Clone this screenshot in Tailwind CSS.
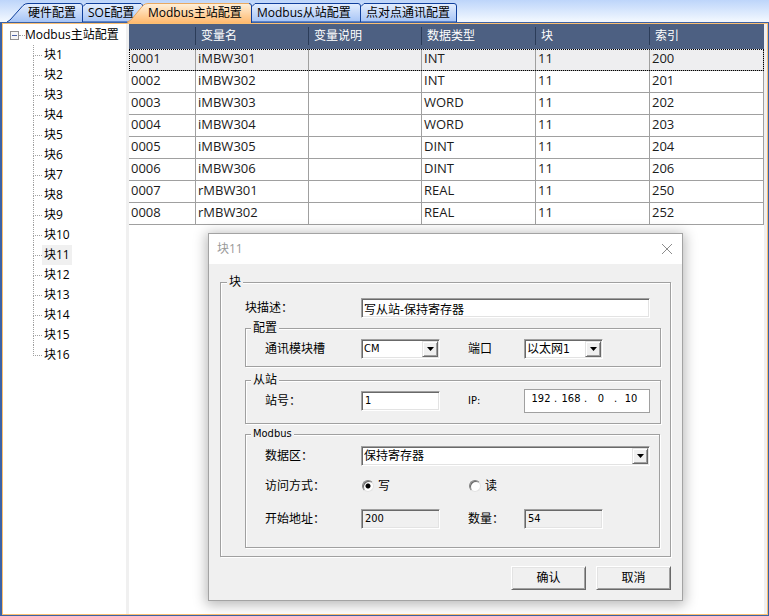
<!DOCTYPE html>
<html lang="zh-CN">
<head>
  <meta charset="UTF-8" />
  <meta name="viewport" content="width=device-width, initial-scale=1.0" />
  <title>Modbus主站配置</title>
  <script src="https://cdn.jsdelivr.net/npm/@tailwindcss/browser@4"></script>
</head>
<body class="min-h-screen flex flex-col bg-[#3b62a5] text-black text-xs font-['Open_Sans','Noto_Sans_CJK_SC',sans-serif]">

  <!-- Tab strip -->
  <nav class="relative z-10 -mb-px h-[23px] shrink-0 bg-linear-to-b from-[#bdd5fa] to-[#f4f9ff] border-b border-[#3b62a5] pl-[7px] pt-[3px]">
    <div class="flex">
      <button class="relative w-[76px] h-[19px] pl-[21px] text-left whitespace-nowrap">
        <svg class="absolute left-0 top-0 w-full h-full" viewBox="0 0 76 19" preserveAspectRatio="none">
          <defs>
            <linearGradient id="blueTab" x1="0" y1="0" x2="0" y2="1">
              <stop offset="0" stop-color="#e4eefe" /><stop offset="1" stop-color="#a6c4f6" />
            </linearGradient>
            <linearGradient id="orangeTab" x1="0" y1="0" x2="0" y2="1">
              <stop offset="0" stop-color="#fff1dc" /><stop offset="1" stop-color="#ffb96e" />
            </linearGradient>
          </defs>
          <path d="M0 19 L3 17 L16 2.500 Q18 .5 21 .5 H73 Q75.500 .5 75.500 3 V19" fill="url(#blueTab)" stroke="#0f3f9c" />
        </svg>
        <span class="relative">硬件配置</span>
      </button>
      <button class="relative w-[60px] h-[19px] pl-[5px] text-left whitespace-nowrap">
        <svg class="absolute left-0 top-0 w-full h-full" viewBox="0 0 60 19" preserveAspectRatio="none">
          <path d="M0 3.500 L3 .5 H58 L59.500 2 V19 H0" fill="url(#blueTab)" stroke="#0f3f9c" />
        </svg>
        <span class="relative">SOE配置</span>
      </button>
      <button class="relative -ml-[16px] -mb-px w-[125px] h-5 pl-[21px] text-left whitespace-nowrap" aria-current="page">
        <svg class="absolute left-0 top-0 w-full h-full" viewBox="0 0 125 20" preserveAspectRatio="none">
          <path d="M0 20 L4 17 L16 2.500 Q18 .5 21 .5 H122 Q124.500 .5 124.500 3 V20" fill="url(#orangeTab)" />
          <path d="M0 19 L4 17 L16 2.500 Q18 .5 21 .5 H122" fill="none" stroke="#e9a860" />
          <path d="M122 .5 Q124.500 .5 124.500 3 V20" fill="none" stroke="#0f3f9c" />
        </svg>
        <span class="relative">Modbus主站配置</span>
      </button>
      <button class="relative w-[109px] h-[19px] pl-[5px] text-left whitespace-nowrap">
        <svg class="absolute left-0 top-0 w-full h-full" viewBox="0 0 109 19" preserveAspectRatio="none">
          <path d="M0 3.500 L3 .5 H106 Q108.500 .5 108.500 3 V19 H0" fill="url(#blueTab)" stroke="#0f3f9c" />
        </svg>
        <span class="relative">Modbus从站配置</span>
      </button>
      <button class="relative w-[96px] h-[19px] pl-[5px] text-left whitespace-nowrap">
        <svg class="absolute left-0 top-0 w-full h-full" viewBox="0 0 96 19" preserveAspectRatio="none">
          <path d="M0 3.500 L3 .5 H93 Q95.500 .5 95.500 3 V19 H0" fill="url(#blueTab)" stroke="#0f3f9c" />
        </svg>
        <span class="relative">点对点通讯配置</span>
      </button>
    </div>
  </nav>

  <div class="flex-1 flex pt-px pl-[2px] pr-px pb-px">
    <main class="relative flex-1 flex bg-white border border-[#fbbf72]">

      <!-- Block tree -->
      <aside class="w-[123px] shrink-0 pt-px">
        <div class="flex items-center h-5 pl-[7px] whitespace-nowrap">
          <svg class="shrink-0 w-[9px] h-[9px]" viewBox="0 0 9 9">
            <rect x=".5" y=".5" width="8" height="8" fill="#f6f6f6" stroke="#919191" />
            <path d="M2 4.500 H7" stroke="#4b63a7" />
          </svg>
          <span class="w-1.5 border-t border-dotted border-[#a0a0a0]"></span>
          <span>Modbus主站配置</span>
        </div>
        <ul id="tree" class="pl-[30px]"></ul>
      </aside>
      <div class="w-[3px] shrink-0 bg-[#f0f0f0]"></div>

      <!-- Variable table -->
      <section class="flex-1">
        <table class="w-full table-fixed border-separate border-spacing-0">
          <colgroup>
            <col class="w-[67px]" />
            <col class="w-[113px]" />
            <col class="w-[113px]" />
            <col class="w-[114px]" />
            <col class="w-[114px]" />
            <col />
          </colgroup>
          <thead>
            <tr class="h-[25px] bg-[#4d6082] text-white text-left">
              <th class="p-0 font-normal"></th>
              <th class="p-0 pb-px font-normal"><div class="-ml-px border-l border-[#2b3c59] pl-[5px] leading-[18px]">变量名</div></th>
              <th class="p-0 pb-px font-normal"><div class="-ml-px border-l border-[#2b3c59] pl-[5px] leading-[18px]">变量说明</div></th>
              <th class="p-0 pb-px font-normal"><div class="-ml-px border-l border-[#2b3c59] pl-[5px] leading-[18px]">数据类型</div></th>
              <th class="p-0 pb-px font-normal"><div class="-ml-px border-l border-[#2b3c59] pl-[5px] leading-[18px]">块</div></th>
              <th class="p-0 pb-px font-normal"><div class="-ml-px border-l border-[#2b3c59] pl-[5px] leading-[18px]">索引</div></th>
            </tr>
          </thead>
          <tbody id="rows" class="text-[13px] leading-[18px] text-[#1b1b1b]"></tbody>
        </table>
      </section>
      <div class="w-[3px] shrink-0 bg-[#f0f0f0]"></div>

      <!-- Block dialog -->
      <div role="dialog" aria-labelledby="dlgTitle" class="absolute left-[205px] top-[209px] w-[475px] border border-[#a3a3a3] bg-[#f0f0f0] shadow-[0_2px_12px_2px_rgba(0,0,0,0.28)]">
        <div class="flex items-center justify-between h-[30px] bg-white pl-2 pr-[9px]">
          <h2 id="dlgTitle" class="text-[#999999]">块11</h2>
          <button aria-label="关闭">
            <svg class="w-3 h-3" viewBox="0 0 12 12"><path d="M1 1 L11 11 M11 1 L1 11" stroke="#8c8c8c" fill="none" /></svg>
          </button>
        </div>

        <form class="px-[11px] pt-[10px] pb-[10px] font-['DejaVu_Sans_Condensed','Noto_Sans_CJK_SC',sans-serif]">
          <fieldset class="border border-[#a0a0a0] shadow-[1px_1px_0_#fff,inset_1px_1px_0_#fff] pl-6 pr-[9px] pb-2">
            <legend class="relative -ml-[18px] px-[2px] leading-4 bg-[#f0f0f0]">块</legend>

            <div class="grid grid-cols-[116px_1fr] items-center mt-2 pr-[11px]">
              <label for="desc">块描述：</label>
              <input id="desc" value="写从站-保持寄存器" class="w-full h-5 px-[2px] bg-white border border-t-[#a0a0a0] border-l-[#a0a0a0] border-r-white border-b-white shadow-[inset_1px_1px_0_#696969,inset_-1px_-1px_0_#e3e3e3]" />
            </div>

            <fieldset class="mt-[2px] border border-[#a0a0a0] shadow-[1px_1px_0_#fff,inset_1px_1px_0_#fff] pl-[19px] pr-[10px] pt-[3px] pb-[7px]">
              <legend class="relative -ml-[14px] px-[2px] leading-4 bg-[#f0f0f0]">配置</legend>
              <div class="grid grid-cols-[96px_107px_56px_1fr] items-center">
                <label for="slot">通讯模块槽</label>
                <div class="relative w-[79px]">
                  <select id="slot" class="block w-full h-5 pl-[2px] appearance-none text-[11px] bg-white border border-t-[#a0a0a0] border-l-[#a0a0a0] border-r-white border-b-white shadow-[inset_1px_1px_0_#696969,inset_-1px_-1px_0_#e3e3e3]"><option>CM</option></select>
                  <span class="absolute right-[2px] top-[2px] bottom-[2px] w-4 flex items-center justify-center pointer-events-none bg-[#f0f0f0] border border-t-[#e3e3e3] border-l-[#e3e3e3] border-r-[#696969] border-b-[#696969] shadow-[inset_1px_1px_0_#fff,inset_-1px_-1px_0_#a0a0a0]">
                    <svg class="w-[7px] h-1" viewBox="0 0 7 4"><path d="M0 0 H7 L3.500 4 Z" /></svg>
                  </span>
                </div>
                <label for="port">端口</label>
                <div class="relative w-[79px]">
                  <select id="port" class="block w-full h-5 pl-[2px] appearance-none bg-white border border-t-[#a0a0a0] border-l-[#a0a0a0] border-r-white border-b-white shadow-[inset_1px_1px_0_#696969,inset_-1px_-1px_0_#e3e3e3]"><option>以太网1</option></select>
                  <span class="absolute right-[2px] top-[2px] bottom-[2px] w-4 flex items-center justify-center pointer-events-none bg-[#f0f0f0] border border-t-[#e3e3e3] border-l-[#e3e3e3] border-r-[#696969] border-b-[#696969] shadow-[inset_1px_1px_0_#fff,inset_-1px_-1px_0_#a0a0a0]">
                    <svg class="w-[7px] h-1" viewBox="0 0 7 4"><path d="M0 0 H7 L3.500 4 Z" /></svg>
                  </span>
                </div>
              </div>
            </fieldset>

            <fieldset class="mt-[5px] border border-[#a0a0a0] shadow-[1px_1px_0_#fff,inset_1px_1px_0_#fff] pl-[19px] pr-[10px] pt-px pb-[10px]">
              <legend class="relative -ml-[14px] px-[2px] leading-4 bg-[#f0f0f0]">从站</legend>
              <div class="grid grid-cols-[96px_107px_56px_1fr] items-center">
                <label for="station">站号：</label>
                <input id="station" value="1" class="w-[79px] h-5 px-[3px] pb-px text-[11px] bg-white border border-t-[#a0a0a0] border-l-[#a0a0a0] border-r-white border-b-white shadow-[inset_1px_1px_0_#696969,inset_-1px_-1px_0_#e3e3e3]" />
                <label for="ip1" class="text-[11px]">IP:</label>
                <div class="flex h-6 pl-[3px] pb-1 items-center text-[11px] bg-white border border-[#a0a0a0]">
                  <input id="ip1" aria-label="IP 1" value="192" class="w-[26px] text-center" />
                  <span class="w-1">.</span>
                  <input aria-label="IP 2" value="168" class="w-[26px] text-center" />
                  <span class="w-1">.</span>
                  <input aria-label="IP 3" value="0" class="w-[26px] text-center" />
                  <span class="w-1">.</span>
                  <input aria-label="IP 4" value="10" class="w-[26px] text-center" />
                </div>
              </div>
            </fieldset>

            <fieldset class="mt-[2px] mr-px border border-[#a0a0a0] shadow-[1px_1px_0_#fff,inset_1px_1px_0_#fff] pl-[19px] pr-[9px] pt-1 pb-[18px]">
              <legend class="relative -ml-[14px] px-[2px] text-[11px] leading-4 bg-[#f0f0f0]">Modbus</legend>
              <div class="grid grid-cols-[96px_1fr] items-center">
                <label for="area">数据区：</label>
                <div class="relative">
                  <select id="area" class="block w-full h-5 pl-[2px] appearance-none bg-white border border-t-[#a0a0a0] border-l-[#a0a0a0] border-r-white border-b-white shadow-[inset_1px_1px_0_#696969,inset_-1px_-1px_0_#e3e3e3]"><option>保持寄存器</option></select>
                  <span class="absolute right-[2px] top-[2px] bottom-[2px] w-4 flex items-center justify-center pointer-events-none bg-[#f0f0f0] border border-t-[#e3e3e3] border-l-[#e3e3e3] border-r-[#696969] border-b-[#696969] shadow-[inset_1px_1px_0_#fff,inset_-1px_-1px_0_#a0a0a0]">
                    <svg class="w-[7px] h-1" viewBox="0 0 7 4"><path d="M0 0 H7 L3.500 4 Z" /></svg>
                  </span>
                </div>
              </div>
              <div class="grid grid-cols-[96px_107px_1fr] items-center mt-3" role="radiogroup" aria-labelledby="modeLabel">
                <span id="modeLabel">访问方式：</span>
                <label class="flex items-center gap-1 pl-px">
                  <input type="radio" name="mode" checked class="appearance-none w-3 h-3 rounded-full bg-white border border-t-[#808080] border-l-[#808080] border-r-[#e3e3e3] border-b-[#e3e3e3] shadow-[inset_1px_1px_0_#696969] checked:bg-[radial-gradient(circle,#000_2px,#fff_3px)]" />写
                </label>
                <label class="flex items-center gap-1 pl-px">
                  <input type="radio" name="mode" class="appearance-none w-3 h-3 rounded-full bg-white border border-t-[#808080] border-l-[#808080] border-r-[#e3e3e3] border-b-[#e3e3e3] shadow-[inset_1px_1px_0_#696969] checked:bg-[radial-gradient(circle,#000_2px,#fff_3px)]" />读
                </label>
              </div>
              <div class="grid grid-cols-[96px_107px_56px_1fr] items-center mt-[15px]">
                <label for="start">开始地址：</label>
                <input id="start" value="200" readonly class="w-[79px] h-5 px-[3px] pb-px text-[11px] bg-[#f0f0f0] border border-t-[#a0a0a0] border-l-[#a0a0a0] border-r-white border-b-white shadow-[inset_1px_1px_0_#696969,inset_-1px_-1px_0_#e3e3e3]" />
                <label for="count">数量：</label>
                <input id="count" value="54" readonly class="w-[79px] h-5 px-[3px] pb-px text-[11px] bg-[#f0f0f0] border border-t-[#a0a0a0] border-l-[#a0a0a0] border-r-white border-b-white shadow-[inset_1px_1px_0_#696969,inset_-1px_-1px_0_#e3e3e3]" />
              </div>
            </fieldset>
          </fieldset>

          <div class="flex justify-end gap-[10px] mt-[9px]">
            <button type="button" class="w-[75px] h-6 bg-[#f0f0f0] border border-t-white border-l-white border-r-[#696969] border-b-[#696969] shadow-[inset_1px_1px_0_#e3e3e3,inset_-1px_-1px_0_#a0a0a0]">确认</button>
            <button type="button" class="w-[75px] h-6 bg-[#f0f0f0] border border-t-white border-l-white border-r-[#696969] border-b-[#696969] shadow-[inset_1px_1px_0_#e3e3e3,inset_-1px_-1px_0_#a0a0a0]">取消</button>
          </div>
        </form>
      </div>
    </main>
  </div>

  <script>
    const tree = document.getElementById('tree');
    const rows = document.getElementById('rows');

    const selectedBlock = 11;
    const blockCount = 16;

    const variables = [
      ['0001', 'iMBW301', '', 'INT', '11', '200'],
      ['0002', 'iMBW302', '', 'INT', '11', '201'],
      ['0003', 'iMBW303', '', 'WORD', '11', '202'],
      ['0004', 'iMBW304', '', 'WORD', '11', '203'],
      ['0005', 'iMBW305', '', 'DINT', '11', '204'],
      ['0006', 'iMBW306', '', 'DINT', '11', '206'],
      ['0007', 'rMBW301', '', 'REAL', '11', '250'],
      ['0008', 'rMBW302', '', 'REAL', '11', '252']
    ];

    for (let i = 1; i <= blockCount; i++) {
      const name = i === selectedBlock ? 'bg-[#f0f0f0] px-[2px] leading-5' : 'px-[2px] leading-5';
      // the vertical guide stops at the middle of the last item
      const guide = i === blockCount ? '' : '<span class="h-[9px] border-l border-dotted border-[#a0a0a0]"></span>';
      tree.innerHTML += `
        <li class="flex h-5">
          <span class="flex flex-col w-[9px]">
            <span class="h-[11px] border-l border-b border-dotted border-[#a0a0a0]"></span>${guide}
          </span>
          <span class="${name}">块${i}</span>
        </li>`;
    }

    variables.forEach((cells, i) => {
      const tr = document.createElement('tr');
      tr.className = i === 0
        ? 'h-[22px] bg-[#eeeef0] outline-1 outline-dotted outline-black -outline-offset-1'
        : 'h-[22px]';
      tr.innerHTML = cells
        .map(text => `<td class="p-0 pl-[2px] pb-[3px] border-r border-b border-[#a0a0a0]">${text}</td>`)
        .join('');
      rows.appendChild(tr);
    });
  </script>
</body>
</html>
